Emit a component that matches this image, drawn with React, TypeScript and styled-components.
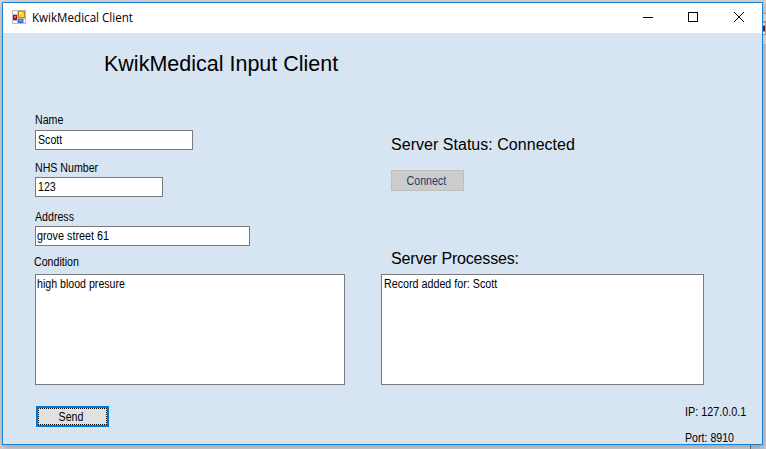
import React from "react";
import styled, { createGlobalStyle } from "styled-components";

const GlobalStyle = createGlobalStyle`
  * { box-sizing: border-box; }
  body { margin: 0; overflow: hidden; }
`;

const Desktop = styled.div`
  position: relative;
  width: 766px;
  height: 449px;
  padding: 2px 0 0 2px;
  overflow: hidden;
  background: #d6d6da;
  font-family: "Liberation Sans", Arial, sans-serif;
  color: #000;
`;

const BackWindow = styled.svg`
  position: absolute;
  top: 0;
  right: 0;
`;

const Window = styled.div`
  position: relative;
  display: flex;
  flex-direction: column;
  width: 761px;
  height: 443px;
  border: 1px solid #1883d7;
  background: #d7e4f2;
  box-shadow: 0 3px 8px rgba(0, 0, 0, 0.25);
`;

const TitleBar = styled.header`
  display: flex;
  align-items: center;
  height: 30px;
  flex: none;
  background: #fff;
  padding: 0 1px 2px 9px;
`;

const Caption = styled.span`
  flex: 1;
  margin: 2px 0 0 6px;
  font: 12px/16px "Open Sans", sans-serif;
  transform: scaleX(0.967);
  transform-origin: left;
  white-space: nowrap;
`;

const CaptionButton = styled.button<{ $width?: number }>`
  display: flex;
  align-items: center;
  justify-content: flex-start;
  width: ${(p) => p.$width ?? 45}px;
  height: 28px;
  padding: 0;
  border: 0;
  background: none;
`;

const Heading = styled.h1`
  margin: 19px 0 0 101px;
  height: 24px;
  font-size: 21.5px;
  line-height: 24px;
  font-weight: 400;
  white-space: nowrap;
`;

const Columns = styled.main`
  display: flex;
  height: 322px;
  padding-left: 32px;
  flex: none;
`;

const Column = styled.section<{ $width: number; $pad: number }>`
  width: ${(p) => p.$width}px;
  padding-top: ${(p) => p.$pad}px;
  flex: none;
`;

const Small = styled.span<{ $scale?: number }>`
  display: inline-block;
  font-size: 12px;
  line-height: 14px;
  white-space: nowrap;
  transform: scaleX(${(p) => p.$scale ?? 0.885});
  transform-origin: left;
`;

const Label = styled.label<{ $gap: number; $shift?: number }>`
  display: flex;
  height: 14px;
  margin: 0 0 ${(p) => p.$gap}px ${(p) => p.$shift ?? 0}px;
`;

const Field = styled.div<{ $width: number; $height?: number; $gap?: number; $inset?: number }>`
  display: flex;
  width: ${(p) => p.$width}px;
  height: ${(p) => p.$height ?? 20}px;
  margin-bottom: ${(p) => p.$gap ?? 0}px;
  padding: 2px 0 0 ${(p) => p.$inset ?? 2}px;
  border: 1px solid #7a7a7a;
  background: #fff;
`;

const Status = styled.h2<{ $gap: number; $tracking?: number }>`
  margin: 0 0 ${(p) => p.$gap}px 10px;
  font-size: 16px;
  line-height: 18px;
  font-weight: 400;
  letter-spacing: ${(p) => p.$tracking ?? 0}px;
  white-space: nowrap;
`;

const Button = styled.button<{ $kind: "disabled" | "focused" }>`
  display: flex;
  align-items: center;
  justify-content: center;
  width: 73px;
  height: 21px;
  padding: 0 2px 0 0;
  font: inherit;
  color: ${(p) => (p.$kind === "disabled" ? "#1f3b66" : "#000")};
  background: ${(p) => (p.$kind === "disabled" ? "#ccc" : "#e1e1e1")};
  border: ${(p) => (p.$kind === "disabled" ? "1px solid #bfbfbf" : "2px solid #0078d7")};
  outline: ${(p) => (p.$kind === "focused" ? "1px dotted #000" : "none")};
  outline-offset: -3px;
  & > span { transform-origin: center; }
`;

const ConnectRow = styled.div`
  margin: 0 0 59px 10px;
`;

const Footer = styled.footer`
  display: flex;
  justify-content: space-between;
  align-items: flex-start;
  padding: 7px 15px 0 33px;
`;

const ButtonSlot = styled.div`
  padding-top: 1px;
`;

const Endpoint = styled.div`
  display: flex;
  flex-direction: column;
  gap: 12px;
  width: 62px;
`;

function AppIcon() {
  return (
    <svg width="14" height="14" viewBox="0 0 14 14" shapeRendering="crispEdges">
      <rect width="14" height="14" fill="#bcbcbc" />
      <path d="M1 1h4v3H1zM1 11h4v2H1zM12 9h1v4h-1z" fill="#fff" />
      <rect x="1" y="5" width="4" height="5" fill="#9b1717" />
      <rect x="2" y="6" width="2" height="2" fill="#dd6b60" />
      <rect x="6" y="1" width="7" height="7" fill="#c68a00" />
      <rect x="7" y="2" width="5" height="5" fill="#ffcf3b" />
      <rect x="7" y="2" width="3" height="2" fill="#ffe892" />
      <rect x="6" y="9" width="5" height="4" fill="#3d70d2" />
      <rect x="7" y="10" width="3" height="1" fill="#8ab5fa" />
    </svg>
  );
}

export default function App() {
  return (
    <>
      <GlobalStyle />
      <Desktop>
        <BackWindow width="16" height="449" shapeRendering="crispEdges">
          <rect x="12" width="4" height="14" fill="#d0d1d6" />
          <rect x="12" y="13" width="4" height="1" fill="#a5a6aa" />
          <rect x="12" y="14" width="4" height="30" fill="#e4e4e4" />
          <rect x="12" y="21" width="4" height="14" fill="#aaa" />
          <rect x="12" y="23" width="3" height="2" fill="#fff" />
          <rect x="12" y="26" width="3" height="5" fill="#8c1818" />
          <rect x="12" y="32" width="3" height="2" fill="#fff" />
          <rect x="12" y="44" width="4" height="405" fill="#c3cad6" />
          <rect y="445" width="1" height="4" fill="#777" />
          <rect x="1" y="445" width="15" height="4" fill="#c3cad6" />
        </BackWindow>
        <Window>
          <TitleBar>
            <AppIcon />
            <Caption>KwikMedical Client</Caption>
            <CaptionButton aria-label="Minimize">
              <svg width="10" height="10" shapeRendering="crispEdges"><path d="M0 5.5h10" stroke="#000" /></svg>
            </CaptionButton>
            <CaptionButton $width={46} aria-label="Maximize">
              <svg width="10" height="10" shapeRendering="crispEdges"><path d="M.5 .5h9v9h-9z" stroke="#000" fill="none" /></svg>
            </CaptionButton>
            <CaptionButton $width={27} aria-label="Close">
              <svg width="10" height="10"><path d="M0 0l10 10M10 0L0 10" stroke="#000" /></svg>
            </CaptionButton>
          </TitleBar>
          <Heading>KwikMedical Input Client</Heading>
          <Columns>
            <Column $width={346} $pad={37}>
              <Label $gap={3}><Small>Name</Small></Label>
              <Field $width={158} $gap={11}><Small>Scott</Small></Field>
              <Label $gap={2}><Small>NHS Number</Small></Label>
              <Field $width={128} $gap={13}><Small>123</Small></Field>
              <Label $gap={2}><Small>Address</Small></Label>
              <Field $width={215} $gap={9} $inset={1}><Small $scale={0.9}>grove street 61</Small></Field>
              <Label $gap={5} $shift={-1}><Small>Condition</Small></Label>
              <Field $width={310} $height={111} $inset={1}><Small>high blood presure</Small></Field>
            </Column>
            <Column $width={323} $pad={60}>
              <Status $gap={16} $tracking={0.03}>Server Status: Connected</Status>
              <ConnectRow>
                <Button $kind="disabled"><Small>Connect</Small></Button>
              </ConnectRow>
              <Status $gap={6} $tracking={-0.17}>Server Processes:</Status>
              <Field $width={323} $height={111}><Small $scale={0.893}>Record added for: Scott</Small></Field>
            </Column>
          </Columns>
          <Footer>
            <ButtonSlot>
              <Button $kind="focused"><Small>Send</Small></Button>
            </ButtonSlot>
            <Endpoint>
              <Small $scale={0.9}>IP: 127.0.0.1</Small>
              <Small>Port: 8910</Small>
            </Endpoint>
          </Footer>
        </Window>
      </Desktop>
    </>
  );
}
